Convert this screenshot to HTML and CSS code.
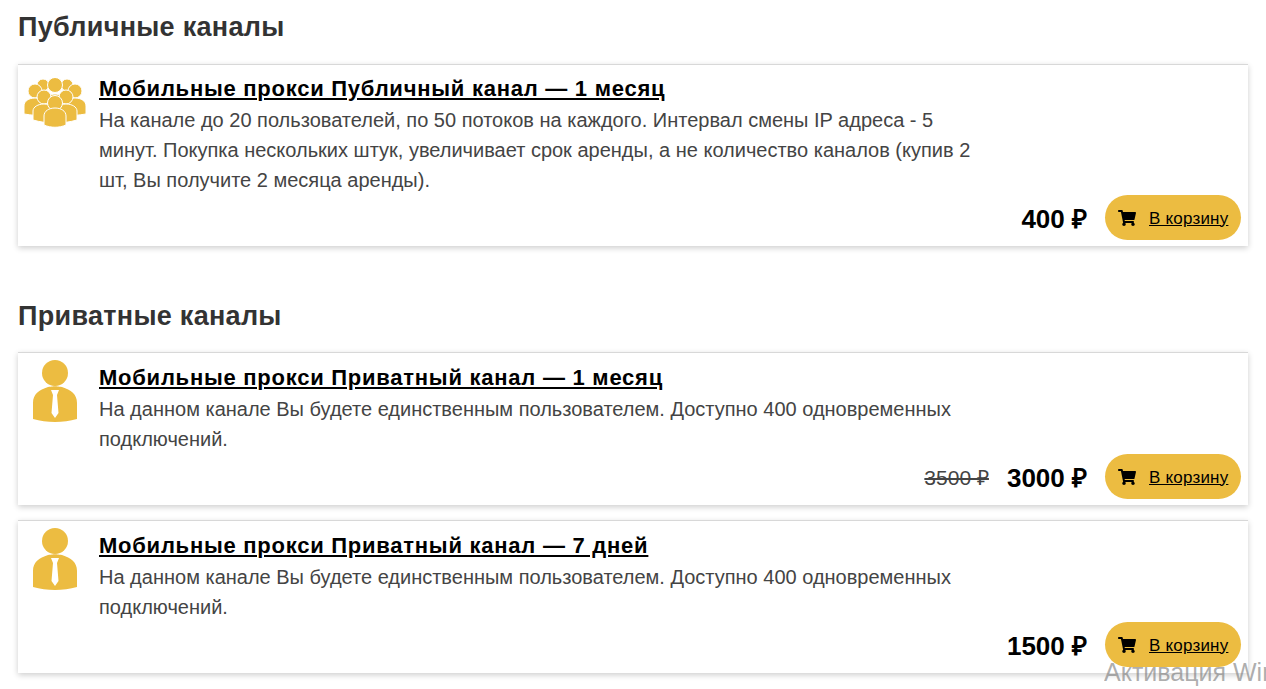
FILE: index.html
```html
<!DOCTYPE html>
<html lang="en">

<head>
    <meta charset="UTF-8">
    <meta name="viewport" content="width=device-width, initial-scale=1">
    <title>Прокси</title>
    <link rel="stylesheet" href="styles.css">
</head>

<body>
    <svg class="defs" width="0" height="0">
        <symbol id="icon-cart" viewBox="0 0 576 512">
            <path d="M528 301l47-208c3-15-8-29-23-29H159l-9-47C148 6 138 0 127 0H24C11 0 0 11 0 24v16c0 13 11 24 24 24h70l70 343c-17 10-28 28-28 49 0 31 25 56 56 56s56-25 56-56c0-16-6-30-17-40h210c-11 10-17 24-17 40 0 31 25 56 56 56s56-25 56-56c0-22-13-41-32-50l6-24c3-15-8-29-23-29H218l-7-32h293c11 0 21-8 24-19z" />
        </symbol>
        <symbol id="icon-person" viewBox="0 0 46 62">
            <circle cx="23" cy="13" r="13" />
            <path d="M1 59V43C1 34 7 30 16 27c9-1 5-1 14 0 9 3 15 7 15 16v16c-14 4-30 4-44 0z" />
            <path class="tie" d="M19 30h8l-2 5 1.500 18-3.500 5-3.500-5 1.500-18z" />
        </symbol>
        <symbol id="icon-group" viewBox="0 0 62 50">
            <g class="crowd">
                <circle cx="19" cy="7" r="6" />
                <circle cx="43" cy="7" r="6" />
                <circle cx="31" cy="7" r="7.500" />
                <circle cx="11" cy="13" r="7" />
                <circle cx="51" cy="13" r="7" />
                <path d="M0 36v-8c0-5 5-8 11-8s11 3 11 8v10c-8 0-15-1-22-2zM62 36v-8c0-5-5-8-11-8s-11 3-11 8v10c8 0 15-1 22-2z" />
                <path d="M22 38V24c0-5 4-8 9-8s9 3 9 8v14z" />
                <circle cx="20" cy="19" r="7" />
                <circle cx="42" cy="19" r="7" />
                <path d="M9 42v-9c0-4 5-7 11-7s11 3 11 7v12c-8 0-15-1-22-3zM53 42v-9c0-4-5-7-11-7s-11 3-11 7v12c8 0 15-1 22-3z" />
                <circle cx="31" cy="25" r="7.500" />
                <path d="M20 47v-9c0-5 5-8 11-8s11 3 11 8v9c-7 3-15 3-22 0z" />
            </g>
        </symbol>
    </svg>

    <h2 class="section-title">Публичные каналы</h2>

    <div class="card">
        <svg class="card-icon icon-wide"><use href="#icon-group"></use></svg>
        <div class="card-body">
            <a class="card-title" href="#">Мобильные прокси Публичный канал — 1 месяц</a>
            <p class="card-text">На канале до 20 пользователей, по 50 потоков на каждого. Интервал смены IP адреса - 5 минут. Покупка нескольких штук, увеличивает срок аренды, а не количество каналов (купив 2 шт, Вы получите 2 месяца аренды).</p>
            <div class="card-buy">
                <span class="price">400 ₽</span>
                <a class="cart-btn" href="#"><svg class="cart-icon"><use href="#icon-cart"></use></svg><span class="cart-label">В корзину</span></a>
            </div>
        </div>
    </div>

    <h2 class="section-title section-next">Приватные каналы</h2>

    <div class="card card-private">
        <svg class="card-icon icon-person"><use href="#icon-person"></use></svg>
        <div class="card-body">
            <a class="card-title" href="#">Мобильные прокси Приватный канал — 1 месяц</a>
            <p class="card-text">На данном канале Вы будете единственным пользователем. Доступно 400 одновременных подключений.</p>
            <div class="card-buy">
                <span class="price-old">3500 ₽</span>
                <span class="price">3000 ₽</span>
                <a class="cart-btn" href="#"><svg class="cart-icon"><use href="#icon-cart"></use></svg><span class="cart-label">В корзину</span></a>
            </div>
        </div>
    </div>

    <div class="card card-private">
        <svg class="card-icon icon-person"><use href="#icon-person"></use></svg>
        <div class="card-body">
            <a class="card-title" href="#">Мобильные прокси Приватный канал — 7 дней</a>
            <p class="card-text">На данном канале Вы будете единственным пользователем. Доступно 400 одновременных подключений.</p>
            <div class="card-buy">
                <span class="price">1500 ₽</span>
                <a class="cart-btn" href="#"><svg class="cart-icon"><use href="#icon-cart"></use></svg><span class="cart-label">В корзину</span></a>
            </div>
        </div>
    </div>

    <div class="watermark">Активация Windows</div>
</body>

</html>
```

FILE: styles.css
```css
html {
    font-family: "Liberation Sans", Arial, sans-serif;
}

body {
    margin: 0;
    padding: 0 18px;
    height: 689px;
    overflow: hidden;
    color: #333;
    background-color: #fff;
}

.defs {
    position: absolute;
}

.section-title {
    margin: 0;
    padding-top: 11px;
    height: 64px;
    box-sizing: border-box;
    font-size: 27px;
    line-height: 32px;
    font-weight: bold;
    letter-spacing: 0.3px;
}

.section-next {
    padding-top: 39px;
    height: 91px;
}

/* Style the product cards */
.card {
    display: flex;
    box-sizing: border-box;
    min-height: 153px;
    margin-bottom: 15px;
    padding: 7px 7px 6px 6px;
    border-top: 1px solid #d8d8d8;
    background-color: #fff;
    box-shadow: 0 2px 6px 0 rgba(0, 0, 0, 0.2);
}

.card-icon {
    flex: none;
    fill: #ecbc41;
}

.icon-wide {
    width: 62px;
    height: 50px;
    margin: 6px 13px 0 0;
}

.icon-person {
    width: 46px;
    height: 62px;
    margin: 0 21px 0 8px;
}

.crowd circle,
.crowd path {
    stroke: #fff;
    stroke-width: 1;
}

.tie {
    fill: #fff;
}

.card-body {
    display: flex;
    flex-direction: column;
    flex: 1;
    min-width: 0;
}

.card-title {
    display: block;
    margin: 4px 0 3px;
    font-size: 22px;
    line-height: 26px;
    font-weight: bold;
    letter-spacing: 0.75px;
    color: #000;
}

.card-private .card-title {
    margin-top: 5px;
}

.card-text {
    margin: 0;
    max-width: 880px;
    font-size: 20px;
    line-height: 30px;
    color: #444;
}

.card-buy {
    display: flex;
    justify-content: flex-end;
    align-items: center;
    margin-top: auto;
}

.price {
    margin-right: 18px;
    font-size: 26px;
    font-weight: bold;
    color: #000;
}

.price-old {
    margin-right: 18px;
    font-size: 21px;
    color: #444;
    text-decoration: line-through;
}

.cart-btn {
    display: flex;
    align-items: center;
    box-sizing: border-box;
    width: 136px;
    height: 45px;
    padding-left: 13px;
    border-radius: 23px;
    background-color: #ecbc41;
    font-size: 17px;
    letter-spacing: 0.2px;
    color: #000;
}

.cart-label {
    margin-top: 2px;
}

.cart-icon {
    width: 18px;
    height: 16px;
    margin-right: 13px;
    fill: #000;
}

/* Windows activation notice over the page */
.watermark {
    position: absolute;
    left: 1104px;
    right: 0;
    top: 658px;
    overflow: hidden;
    white-space: nowrap;
    font-size: 25px;
    color: rgba(120, 120, 120, 0.6);
}
```
